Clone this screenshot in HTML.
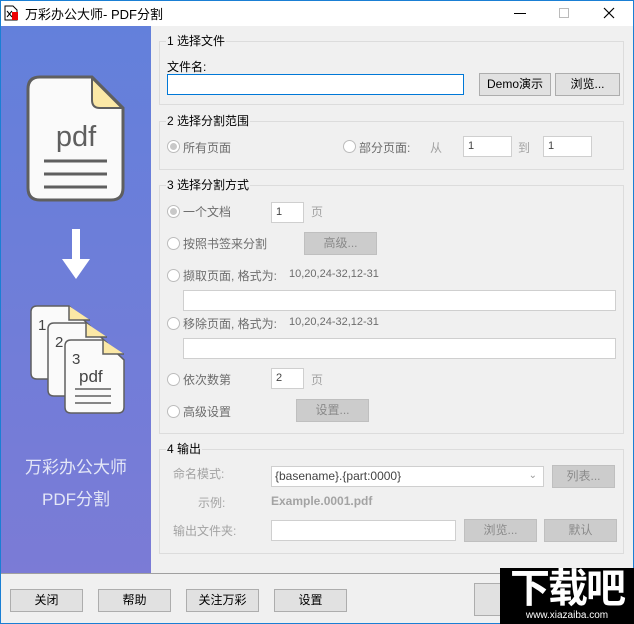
<!DOCTYPE html>
<html><head><meta charset="utf-8"><style>
*{margin:0;padding:0;box-sizing:border-box}
body{width:634px;height:624px;overflow:hidden;background:#f0f0f0;font-family:"Liberation Sans","Noto Sans CJK SC",sans-serif;font-size:12px;color:#000;position:relative}
.a{position:absolute;white-space:nowrap}
.win{position:absolute;left:0;top:0;width:634px;height:624px;border:1px solid #1a7fd4;pointer-events:none}
.grp{position:absolute;border:1px solid #dcdcdc;left:159px;width:465px}
.leg{position:absolute;background:#f0f0f0;padding:0 1px;left:166px;font-size:12px;line-height:14px}
.in{position:absolute;background:#fff;border:1px solid #cfcfcf;font-size:11px;padding-left:4px;line-height:18px;color:#444}
.btn{position:absolute;background:#e1e1e1;border:1px solid #adadad;text-align:center;font-size:12px}
.dbtn{position:absolute;background:#cccccc;border:1px solid #bfbfbf;text-align:center;color:#8a8a8a;font-size:12px}
.rad{position:absolute;width:13px;height:13px;border-radius:50%;border:1px solid #bcbcbc;background:#fff}
.rad.on::after{content:"";position:absolute;left:2px;top:2px;width:7px;height:7px;border-radius:50%;background:#c8c8c8}
.lbl{color:#6d6d6d}
.g{color:#a3a3a3}
</style></head><body>
<div class="a" style="left:0;top:0;width:634px;height:26px;background:#fff"></div>
<svg class="a" style="left:4px;top:5px" width="16" height="16" viewBox="0 0 16 16"><path d="M1 1h8l4 4v10H1z" fill="#fff" stroke="#000"/><rect x="8" y="7" width="6" height="8" fill="#e00"/><path d="M3 6l5 6M8 6l-5 6" stroke="#000"/></svg>
<div class="a" style="left:25px;top:4px;font-size:13px">万彩办公大师- PDF分割</div>
<div class="a" style="left:514px;top:13px;width:12px;height:1px;background:#000"></div>
<div class="a" style="left:559px;top:8px;width:10px;height:10px;border:1px solid #bbb"></div>
<svg class="a" style="left:603px;top:7px" width="12" height="12"><path d="M1 1l10 10M11 1L1 11" stroke="#000" stroke-width="1.2"/></svg>

<div class="a" style="left:1px;top:26px;width:150px;height:547px;background:linear-gradient(#6380db,#7b7bd6)"></div>
<svg class="a" style="left:1px;top:26px" width="150" height="547" viewBox="1 26 150 547">
<path d="M40 77h52l31 31v80q0 12-12 12H40q-12 0-12-12V89q0-12 12-12z" fill="#fafafa" stroke="#5f5f5f" stroke-width="3"/>
<path d="M92 78v22q0 8 8 8h22z" fill="#fbe8a6" stroke="#5f5f5f" stroke-width="2"/>
<text x="76" y="146" text-anchor="middle" font-family="Liberation Sans" font-size="29" fill="#5f5f5f">pdf</text>
<path d="M44 161h63M44 174h63M44 187h63" stroke="#5f5f5f" stroke-width="3"/>
<path d="M72 229h8v30h10l-14 20-14-20h10z" fill="#fff"/>
<g stroke="#5f5f5f" stroke-width="1.5">
<path d="M37 306h32l21 20v47q0 6-6 6H37q-6 0-6-6v-61q0-6 6-6z" fill="#fafafa"/><path d="M69 306v14h21" fill="#fbe8a6"/>
<path d="M54 323h32l21 20v47q0 6-6 6H54q-6 0-6-6v-61q0-6 6-6z" fill="#fafafa"/><path d="M86 323v14h21" fill="#fbe8a6"/>
<path d="M71 340h32l21 20v47q0 6-6 6H71q-6 0-6-6v-61q0-6 6-6z" fill="#fafafa"/><path d="M103 340v14h21" fill="#fbe8a6"/>
<path d="M75 389h36M75 396h36M75 403h36"/></g>
<text x="38" y="330" font-family="Liberation Sans" font-size="15" fill="#444">1</text>
<text x="55" y="347" font-family="Liberation Sans" font-size="15" fill="#444">2</text>
<text x="72" y="364" font-family="Liberation Sans" font-size="15" fill="#444">3</text>
<text x="79" y="382" font-family="Liberation Sans" font-size="17" fill="#444">pdf</text>
</svg>
<div class="a" style="left:1px;top:453px;width:150px;text-align:center;color:#e4e7f7;font-size:17px">万彩办公大师</div>
<div class="a" style="left:1px;top:485px;width:150px;text-align:center;color:#e4e7f7;font-size:17px">PDF分割</div>

<div class="grp" style="top:41px;height:64px"></div><div class="leg" style="top:34px">1 选择文件</div>
<div class="a" style="left:167px;top:58px">文件名:</div>
<div class="a" style="left:167px;top:74px;width:297px;height:21px;border:1px solid #0078d7;background:#fff"></div>
<div class="btn" style="left:479px;top:73px;width:72px;height:23px;line-height:21px">Demo演示</div>
<div class="btn" style="left:555px;top:73px;width:65px;height:23px;line-height:21px">浏览...</div>

<div class="grp" style="top:121px;height:49px"></div><div class="leg" style="top:114px">2 选择分割范围</div>
<div class="rad on" style="left:167px;top:140px"></div><div class="a lbl" style="left:183px;top:139px">所有页面</div>
<div class="rad" style="left:343px;top:140px"></div><div class="a lbl" style="left:359px;top:139px">部分页面:</div>
<div class="a g" style="left:430px;top:139px">从</div>
<div class="in" style="left:463px;top:136px;width:49px;height:21px">1</div>
<div class="a g" style="left:518px;top:139px">到</div>
<div class="in" style="left:543px;top:136px;width:49px;height:21px">1</div>

<div class="grp" style="top:185px;height:249px"></div><div class="leg" style="top:178px">3 选择分割方式</div>
<div class="rad on" style="left:167px;top:205px"></div><div class="a lbl" style="left:183px;top:203px">一个文档</div>
<div class="in" style="left:271px;top:202px;width:33px;height:21px">1</div><div class="a g" style="left:311px;top:203px">页</div>
<div class="rad" style="left:167px;top:237px"></div><div class="a lbl" style="left:183px;top:235px">按照书签来分割</div>
<div class="dbtn" style="left:304px;top:232px;width:73px;height:23px;line-height:21px">高级...</div>
<div class="rad" style="left:167px;top:269px"></div><div class="a lbl" style="left:183px;top:267px">撷取页面, 格式为:</div>
<div class="a lbl" style="left:289px;top:268px;font-size:11px">10,20,24-32,12-31</div>
<div class="in" style="left:183px;top:290px;width:433px;height:21px"></div>
<div class="rad" style="left:167px;top:317px"></div><div class="a lbl" style="left:183px;top:315px">移除页面, 格式为:</div>
<div class="a lbl" style="left:289px;top:316px;font-size:11px">10,20,24-32,12-31</div>
<div class="in" style="left:183px;top:338px;width:433px;height:21px"></div>
<div class="rad" style="left:167px;top:373px"></div><div class="a lbl" style="left:183px;top:371px">依次数第</div>
<div class="in" style="left:271px;top:368px;width:33px;height:21px">2</div><div class="a g" style="left:311px;top:371px">页</div>
<div class="rad" style="left:167px;top:405px"></div><div class="a lbl" style="left:183px;top:403px">高级设置</div>
<div class="dbtn" style="left:296px;top:399px;width:73px;height:23px;line-height:21px">设置...</div>

<div class="grp" style="top:449px;height:105px"></div><div class="leg" style="top:442px">4 输出</div>
<div class="a g" style="left:173px;top:465px">命名模式:</div>
<div class="in" style="left:271px;top:466px;width:273px;height:21px;font-size:12px;color:#444;padding-left:3px">{basename}.{part:0000}<span style="position:absolute;right:6px;color:#999;font-size:10px">&#8964;</span></div>
<div class="dbtn" style="left:552px;top:465px;width:63px;height:23px;line-height:21px">列表...</div>
<div class="a g" style="left:198px;top:494px">示例:</div>
<div class="a g" style="left:271px;top:494px;font-weight:bold">Example.0001.pdf</div>
<div class="a g" style="left:173px;top:522px">输出文件夹:</div>
<div class="in" style="left:271px;top:520px;width:185px;height:21px"></div>
<div class="dbtn" style="left:464px;top:519px;width:73px;height:23px;line-height:21px">浏览...</div>
<div class="dbtn" style="left:544px;top:519px;width:73px;height:23px;line-height:21px">默认</div>

<div class="a" style="left:1px;top:573px;width:632px;height:1px;background:#a0a0a0"></div>
<div class="btn" style="left:10px;top:589px;width:73px;height:23px;line-height:21px">关闭</div>
<div class="btn" style="left:98px;top:589px;width:73px;height:23px;line-height:21px">帮助</div>
<div class="btn" style="left:186px;top:589px;width:73px;height:23px;line-height:21px">关注万彩</div>
<div class="btn" style="left:274px;top:589px;width:73px;height:23px;line-height:21px">设置</div>
<div class="btn" style="left:474px;top:583px;width:40px;height:33px"></div>
<div class="win"></div>
<div class="a" style="left:500px;top:568px;width:134px;height:56px;background:#000"></div>
<div class="a" style="left:502px;top:566px;width:130px;font-size:40px;font-weight:bold;color:#fff;letter-spacing:-2px;line-height:46px;text-align:center">下载吧</div>
<div class="a" style="left:500px;top:610px;width:134px;text-align:center;color:#fff;font-size:10px;line-height:12px">www.xiazaiba.com</div>
</body></html>
